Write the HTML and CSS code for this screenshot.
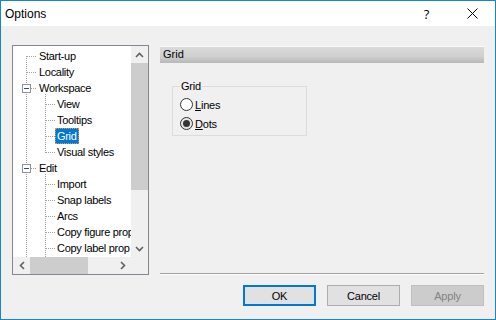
FILE: index.html
```html
<!DOCTYPE html>
<html lang="en">
<head>
    <meta charset="UTF-8">
    <title>Options</title>
    <link rel="stylesheet" href="styles.css">
</head>
<body>
    <div class="window">
        <div class="titlebar">
            <span class="title">Options</span>
            <span class="title-btn help">?</span>
            <span class="title-btn close">
                <svg width="11" height="11" viewBox="0 0 11 11"><path d="M0.5 0.5 L10.5 10.5 M10.5 0.5 L0.5 10.5" stroke="#000" stroke-width="1" fill="none"/></svg>
            </span>
        </div>

        <div class="dialog">
            <div class="main">
                <div class="tree">
                    <div class="tree-view">
                        <div class="tree-items">
                            <svg class="tree-lines" width="118" height="211" viewBox="0 0 118 211" shape-rendering="crispEdges">
                                <g stroke="#a0a0a0" stroke-dasharray="1 1" fill="none">
                                    <path d="M13.5 10 V211"/>
                                    <path d="M32.5 48 V107"/>
                                    <path d="M32.5 128 V211"/>
                                    <path d="M14 10.5 H23 M14 26.5 H23 M18 42.5 H23 M18 122.5 H23"/>
                                    <path d="M33 58.5 H42 M33 74.5 H42 M33 90.5 H42 M33 106.5 H42"/>
                                    <path d="M33 138.5 H42 M33 154.5 H42 M33 170.5 H42 M33 186.5 H42 M33 202.5 H42"/>
                                </g>
                                <g>
                                    <rect x="9.5" y="38.5" width="8" height="8" fill="#fff" stroke="#919191"/>
                                    <path d="M11 42.5 H16" stroke="#2b4a9a"/>
                                    <rect x="9.5" y="118.5" width="8" height="8" fill="#fff" stroke="#919191"/>
                                    <path d="M11 122.5 H16" stroke="#2b4a9a"/>
                                </g>
                            </svg>
                            <div class="node lvl1"><span class="label">Start-up</span></div>
                            <div class="node lvl1"><span class="label">Locality</span></div>
                            <div class="node lvl1"><span class="label">Workspace</span></div>
                            <div class="node lvl2"><span class="label">View</span></div>
                            <div class="node lvl2"><span class="label">Tooltips</span></div>
                            <div class="node lvl2"><span class="label selected">Grid</span></div>
                            <div class="node lvl2"><span class="label">Visual styles</span></div>
                            <div class="node lvl1"><span class="label">Edit</span></div>
                            <div class="node lvl2"><span class="label">Import</span></div>
                            <div class="node lvl2"><span class="label">Snap labels</span></div>
                            <div class="node lvl2"><span class="label">Arcs</span></div>
                            <div class="node lvl2"><span class="label">Copy figure prop</span></div>
                            <div class="node lvl2"><span class="label">Copy label prop</span></div>
                        </div>
                        <div class="vscroll">
                            <div class="sb-btn">
                                <svg width="9" height="6" viewBox="0 0 9 6"><path d="M1 5 L4.5 1.5 L8 5" stroke="#606060" stroke-width="1.6" fill="none"/></svg>
                            </div>
                            <div class="vthumb"></div>
                            <div class="vtrack"></div>
                            <div class="sb-btn">
                                <svg width="9" height="6" viewBox="0 0 9 6"><path d="M1 1 L4.5 4.5 L8 1" stroke="#606060" stroke-width="1.6" fill="none"/></svg>
                            </div>
                        </div>
                    </div>
                    <div class="hscroll-row">
                        <div class="hscroll">
                            <div class="sb-btn">
                                <svg width="6" height="9" viewBox="0 0 6 9"><path d="M5 1 L1.5 4.5 L5 8" stroke="#606060" stroke-width="1.6" fill="none"/></svg>
                            </div>
                            <div class="hthumb"></div>
                            <div class="htrack"></div>
                            <div class="sb-btn">
                                <svg width="6" height="9" viewBox="0 0 6 9"><path d="M1 1 L4.5 4.5 L1 8" stroke="#606060" stroke-width="1.6" fill="none"/></svg>
                            </div>
                        </div>
                        <div class="corner"></div>
                    </div>
                </div>

                <div class="page">
                    <div class="page-header">Grid</div>
                    <div class="group">
                        <span class="group-label">Grid</span>
                        <div class="radio-row">
                            <span class="radio"></span>
                            <span class="radio-text"><u>L</u>ines</span>
                        </div>
                        <div class="radio-row">
                            <span class="radio checked"></span>
                            <span class="radio-text"><u>D</u>ots</span>
                        </div>
                    </div>
                    <div class="separator"></div>
                </div>
            </div>

            <div class="buttons">
                <button class="btn default">OK</button>
                <button class="btn">Cancel</button>
                <button class="btn disabled">Apply</button>
            </div>
        </div>
    </div>
</body>
</html>
```

FILE: styles.css
```css
body {
    margin: 0;
    padding: 0;
    font-family: "Liberation Sans", Arial, sans-serif;
    background-color: #f0f0f0;
}

.window {
    width: 496px;
    height: 320px;
    box-sizing: border-box;
    border: 1px solid #1a82d8;
    background-color: #f0f0f0;
    display: flex;
    flex-direction: column;
}

.titlebar {
    height: 25px;
    background-color: #ffffff;
    display: flex;
    align-items: center;
}

.title {
    flex: 1;
    padding-left: 4px;
    font-size: 12px;
    color: #000;
}

.title-btn {
    width: 45px;
    height: 25px;
    display: flex;
    align-items: center;
    justify-content: center;
}

.help {
    font-family: "Open Sans", sans-serif;
    font-size: 13px;
    color: #000;
    margin-right: 1px;
}

.dialog {
    flex: 1;
    padding: 19px 11px 0 11px;
    display: flex;
    flex-direction: column;
}

.main {
    display: flex;
    gap: 11px;
    height: 230px;
}

/* tree view */

.tree {
    width: 137px;
    height: 230px;
    box-sizing: border-box;
    border: 1px solid #828790;
    background-color: #ffffff;
    display: flex;
    flex-direction: column;
}

.tree-view {
    display: flex;
    height: 211px;
}

.tree-items {
    position: relative;
    width: 118px;
    overflow: hidden;
    padding-top: 2px;
    box-sizing: border-box;
}

.tree-lines {
    position: absolute;
    left: 0;
    top: 0;
}

.node {
    height: 16px;
    display: flex;
    align-items: center;
    font-size: 11px;
    letter-spacing: -0.3px;
    color: #000;
    white-space: nowrap;
}

.lvl1 {
    padding-left: 24px;
}

.lvl2 {
    padding-left: 42px;
}

.label {
    position: relative;
    height: 16px;
    line-height: 16px;
    padding: 0 2px;
}

.label.selected {
    background-color: #0078d7;
    color: #ffffff;
    outline: 1px dotted #e89a3c;
    outline-offset: -1px;
}

.vscroll {
    width: 17px;
    display: flex;
    flex-direction: column;
    background-color: #f0f0f0;
}

.sb-btn {
    width: 17px;
    height: 17px;
    display: flex;
    align-items: center;
    justify-content: center;
    background-color: #f0f0f0;
}

.vthumb {
    height: 127px;
    background-color: #cdcdcd;
}

.vtrack {
    flex: 1;
}

.hscroll-row {
    display: flex;
    height: 17px;
}

.hscroll {
    width: 118px;
    display: flex;
    background-color: #f0f0f0;
}

.hthumb {
    width: 58px;
    background-color: #cdcdcd;
}

.htrack {
    flex: 1;
}

.corner {
    width: 17px;
    background-color: #f0f0f0;
}

/* property page */

.page {
    width: 324px;
    display: flex;
    flex-direction: column;
}

.page-header {
    margin-top: 1px;
    height: 17px;
    line-height: 17px;
    padding-left: 3px;
    font-size: 11px;
    color: #000;
    background: linear-gradient(#fafafa 0, #fafafa 1px, #dadada 1px, #d0d0d0 60%, #b8b8b8 100%);
}

.group {
    margin: 23px 0 0 12px;
    width: 135px;
    height: 50px;
    box-sizing: border-box;
    border: 1px solid #dcdcdc;
    padding: 0 0 0 7px;
    display: flex;
    flex-direction: column;
}

.group-label {
    margin-top: -8px;
    height: 14px;
    line-height: 14px;
    width: fit-content;
    padding: 0 1px;
    background-color: #f0f0f0;
    font-size: 11px;
    letter-spacing: -0.2px;
    color: #000;
}

.radio-row {
    height: 19px;
    display: flex;
    align-items: center;
    gap: 2px;
    font-size: 11px;
    letter-spacing: -0.2px;
    color: #000;
}

.radio-row:first-of-type {
    margin-top: 2px;
}

.group-label + .radio-row {
    margin-top: 2px;
}

.radio {
    width: 13px;
    height: 13px;
    box-sizing: border-box;
    border: 1px solid #333333;
    border-radius: 50%;
    background-color: #ffffff;
    display: flex;
    align-items: center;
    justify-content: center;
}

.radio.checked {
    background-color: #e6e6e6;
}

.radio.checked::after {
    content: "";
    width: 7px;
    height: 7px;
    border-radius: 50%;
    background-color: #333333;
}

.separator {
    margin-top: auto;
    border-top: 1px solid #a0a0a0;
    border-bottom: 1px solid #ffffff;
}

/* buttons */

.buttons {
    margin-top: 10px;
    display: flex;
    justify-content: flex-end;
    gap: 11px;
}

.btn {
    width: 73px;
    height: 21px;
    box-sizing: border-box;
    margin: 0;
    padding: 0;
    border: 1px solid #adadad;
    background-color: #e1e1e1;
    font-family: "Liberation Sans", Arial, sans-serif;
    font-size: 11px;
    letter-spacing: -0.2px;
    color: #000;
}

.btn.default {
    border: 2px solid #0078d7;
}

.btn.disabled {
    border-color: #bfbfbf;
    background-color: #cccccc;
    color: #838383;
}
```
